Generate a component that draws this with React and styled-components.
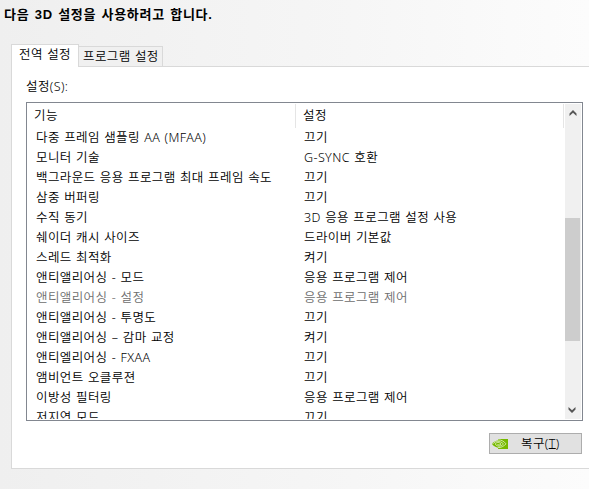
import React from 'react';
import styled, { createGlobalStyle } from 'styled-components';

const rows = [
  { name: '다중 프레임 샘플링 AA (MFAA)', value: '끄기' },
  { name: '모니터 기술', value: 'G-SYNC 호환' },
  { name: '백그라운드 응용 프로그램 최대 프레임 속도', value: '끄기' },
  { name: '삼중 버퍼링', value: '끄기' },
  { name: '수직 동기', value: '3D 응용 프로그램 설정 사용' },
  { name: '쉐이더 캐시 사이즈', value: '드라이버 기본값' },
  { name: '스레드 최적화', value: '켜기' },
  { name: '앤티앨리어싱 - 모드', value: '응용 프로그램 제어' },
  { name: '앤티앨리어싱 - 설정', value: '응용 프로그램 제어', disabled: true },
  { name: '앤티앨리어싱 - 투명도', value: '끄기' },
  { name: '앤티앨리어싱 – 감마 교정', value: '켜기' },
  { name: '앤티엘리어싱 - FXAA', value: '끄기' },
  { name: '앰비언트 오클루젼', value: '끄기' },
  { name: '이방성 필터링', value: '응용 프로그램 제어' },
  { name: '저지연 모드', value: '끄기' },
];

export default function App() {
  return (
    <Page>
      <GlobalStyle />
      <Title>다음 3D 설정을 사용하려고 합니다.</Title>
      <Tabs>
        <Tab $active>전역 설정</Tab>
        <Tab>프로그램 설정</Tab>
      </Tabs>
      <Panel>
        <Label>설정(S):</Label>
        <ListBox>
          <Table>
            <Header>
              <HeaderCell $width="269px">기능</HeaderCell>
              <HeaderCell $width="268px">설정</HeaderCell>
            </Header>
            {rows.map((row) => (
              <Row key={row.name} $disabled={row.disabled}>
                <NameCell>{row.name}</NameCell>
                <span>{row.value}</span>
              </Row>
            ))}
          </Table>
          <ScrollBar>
            <Arrow />
            <Thumb />
            <Arrow $down />
          </ScrollBar>
        </ListBox>
        <RestoreButton>
          <NvidiaIcon />
          <ButtonText>
            복구(<u>T</u>)
          </ButtonText>
        </RestoreButton>
      </Panel>
    </Page>
  );
}

function Arrow({ $down }) {
  return (
    <ArrowBox $down={$down}>
      <svg width="8" height="6" viewBox="0 0 8 6">
        <path d="M0.5 3.4L4 0L7.5 3.4V6L4 2.7L0.5 6Z" fill="#555" />
      </svg>
    </ArrowBox>
  );
}

function NvidiaIcon() {
  return (
    <svg width="16" height="10" viewBox="0 0 16 10">
      <path d="M6 0H16V10H6Z" fill="#76b900" />
      <path d="M0 5C3 0.8 8 0 14 5C10 10 4 10 0 5Z" fill="#76b900" />
      <path
        d="M6 0.9C9.5 0.7 12 2.4 14 4.8C11.8 7.3 9 8.8 6 8.6M1 4.8C3.3 1.7 8 1.2 11.4 4.9C8.7 8 5 7.8 3.1 4.9C4.7 2.9 7.3 3 9 5C7.6 6.5 6.1 6.3 5.3 5"
        fill="none"
        stroke="#e5f2cd"
        strokeWidth="0.8"
      />
    </svg>
  );
}

const GlobalStyle = createGlobalStyle`
  * {
    box-sizing: border-box;
  }

  body {
    margin: 0;
    overflow: hidden;
  }
`;

const Page = styled.div`
  width: 589px;
  height: 489px;
  overflow: hidden;
  background: linear-gradient(90deg, #efefef, #f6f6f6 60%, #fcfcfc);
  color: #000;
  font-family: "Noto Sans", "Noto Sans CJK KR", sans-serif;
  font-size: 12.5px;
  font-weight: 350;
  letter-spacing: 0.4px;
  word-spacing: 0.7px;
  white-space: nowrap;
`;

const Title = styled.div`
  height: 44px;
  padding: 5px 0 0 4px;
  font-family: "Liberation Sans", "Noto Sans CJK KR", sans-serif;
  font-size: 13px;
  font-weight: bold;
  letter-spacing: 0.7px;
  line-height: 20px;
  word-spacing: 1.1px;
`;

const Tabs = styled.div`
  display: flex;
  align-items: flex-end;
  height: 22px;
  padding-left: 11px;
`;

const Tab = styled.div`
  position: relative;
  width: ${(props) => (props.$active ? '68px' : '84px')};
  height: ${(props) => (props.$active ? '23px' : '20px')};
  margin-bottom: ${(props) => (props.$active ? '-1px' : '0')};
  padding-left: ${(props) => (props.$active ? '7px' : '4px')};
  border: 1px solid #d9d9d9;
  border-left-width: ${(props) => (props.$active ? '1px' : '0')};
  border-bottom: 0;
  background: ${(props) => (props.$active ? '#fff' : '#f0f0f0')};
  line-height: ${(props) => (props.$active ? '20px' : '19px')};
`;

const Panel = styled.div`
  display: flex;
  flex-direction: column;
  width: 600px;
  height: 403px;
  margin-left: 11px;
  padding-left: 14px;
  border: 1px solid #d9d9d9;
  background: #fff;
`;

const Label = styled.div`
  height: 35px;
  padding-top: 10px;
  line-height: 20px;
`;

const ListBox = styled.div`
  display: flex;
  flex-shrink: 0;
  width: 557px;
  height: 319px;
  border: 1px solid #828790;
  overflow: hidden;
`;

const Table = styled.div`
  width: 538px;
  height: 316px;
  overflow: hidden;
`;

const Header = styled.div`
  display: flex;
  height: 25px;
`;

const HeaderCell = styled.div`
  width: ${(props) => props.$width};
  height: 24px;
  margin-top: 1px;
  padding-left: 7px;
  border-right: 1px solid #e5e5e5;
  line-height: 23px;
`;

const Row = styled.div`
  display: flex;
  height: 20px;
  padding-left: 9px;
  color: ${(props) => (props.$disabled ? '#6d6d6d' : '#000')};
  line-height: 20px;
`;

const NameCell = styled.span`
  width: 268px;
`;

const ScrollBar = styled.div`
  display: flex;
  flex-direction: column;
  width: 16px;
  height: 315px;
  margin-top: 1px;
  background: #f0f0f0;
`;

const ArrowBox = styled.div`
  display: flex;
  align-items: center;
  justify-content: center;
  width: 15px;
  height: 17px;
  margin-top: ${(props) => (props.$down ? 'auto' : '0')};
  transform: ${(props) => (props.$down ? 'rotate(180deg)' : 'none')};
`;

const Thumb = styled.div`
  width: 15px;
  height: 123px;
  margin-top: 97px;
  background: #cdcdcd;
`;

const RestoreButton = styled.button`
  display: flex;
  align-items: center;
  width: 93px;
  height: 21px;
  margin: 12px 0 0 463px;
  padding: 0 0 0 2px;
  border: 1px solid #adadad;
  background: #e1e1e1;
  color: #000;
  font: inherit;
  letter-spacing: inherit;
`;

const ButtonText = styled.span`
  margin-left: 13px;
  line-height: 17px;

  u {
    text-underline-offset: 0;
  }
`;
